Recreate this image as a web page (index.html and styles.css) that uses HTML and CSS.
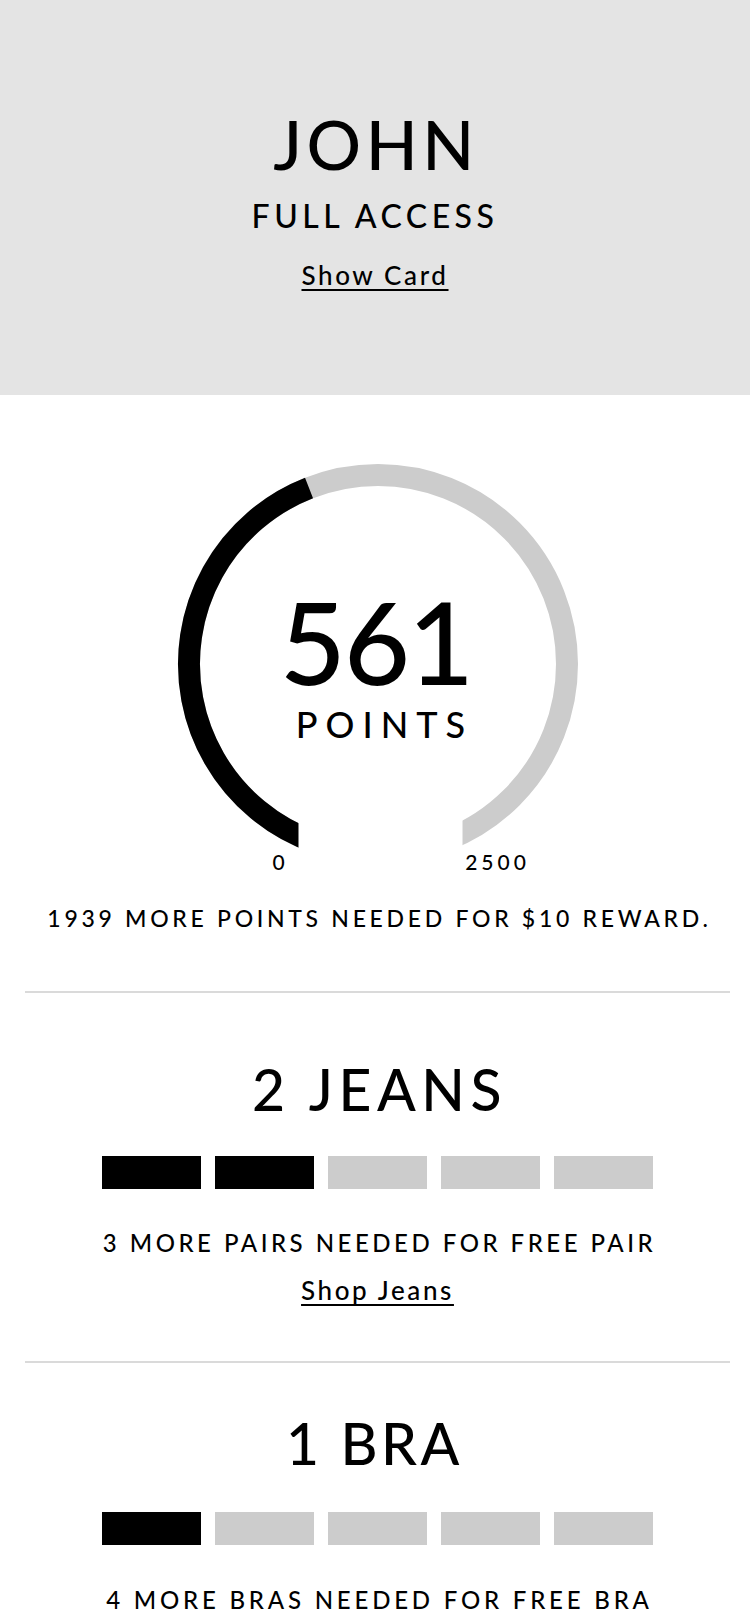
FILE: index.html
```html
<!DOCTYPE html>
<html lang="en">
<head>
<meta charset="utf-8">
<title>Rewards</title>
<link rel="stylesheet" href="styles.css">
</head>
<body>
<header class="member">
  <h1 class="member-name">JOHN</h1>
  <p class="member-tier">FULL ACCESS</p>
  <a class="member-link" href="#">Show Card</a>
</header>
<main class="rewards">
  <section class="points">
    <div class="gauge">
      <svg class="gauge-ring" width="404" height="400" viewBox="0 0 404 400" aria-hidden="true">
        <defs>
          <mask id="gauge-cut">
            <rect x="0" y="0" width="404" height="400" fill="#fff"/>
            <rect x="122.5" y="320" width="164" height="80" fill="#000"/>
          </mask>
        </defs>
        <g mask="url(#gauge-cut)">
          <circle cx="202" cy="200" r="189" fill="none" stroke="#cccccc" stroke-width="22"/>
          <path d="M 202 389 A 189 189 0 0 1 133.03 24.02" fill="none" stroke="#000" stroke-width="22"/>
        </g>
      </svg>
      <div class="gauge-value">561</div>
      <div class="gauge-unit">POINTS</div>
      <div class="gauge-scale">
        <span class="gauge-min">0</span>
        <span class="gauge-max">2500</span>
      </div>
    </div>
    <p class="points-note">1939 MORE POINTS NEEDED FOR $10 REWARD.</p>
  </section>
  <section class="tally tally-jeans">
    <h2 class="tally-title">2 JEANS</h2>
    <div class="tally-bars">
      <span class="bar bar-on"></span>
      <span class="bar bar-on"></span>
      <span class="bar"></span>
      <span class="bar"></span>
      <span class="bar"></span>
    </div>
    <p class="tally-note">3 MORE PAIRS NEEDED FOR FREE PAIR</p>
    <a class="tally-link" href="#">Shop Jeans</a>
  </section>
  <section class="tally tally-bra">
    <h2 class="tally-title">1 BRA</h2>
    <div class="tally-bars">
      <span class="bar bar-on"></span>
      <span class="bar"></span>
      <span class="bar"></span>
      <span class="bar"></span>
      <span class="bar"></span>
    </div>
    <p class="tally-note">4 MORE BRAS NEEDED FOR FREE BRA</p>
  </section>
</main>
</body>
</html>
```
FILE: styles.css
```css
* { box-sizing: border-box; }

html, body {
  margin: 0;
  padding: 0;
  background: #ffffff;
}

body {
  font-family: "Lato", "Open Sans", sans-serif;
  font-weight: 500;
  color: #000;
  width: 750px;
  height: 1624px;
  overflow: hidden;
}

h1, h2, p { margin: 0; font-weight: 500; }

a { color: #000; }

/* ---------- header ---------- */
.member {
  height: 395px;
  background: #e4e4e4;
  display: flex;
  flex-direction: column;
  align-items: center;
  padding-top: 110px;
}

.member-name {
  font-size: 68px;
  line-height: 1;
  letter-spacing: 4.5px;
  padding-left: 2px;
}

.member-tier {
  margin-top: 22px;
  font-size: 32px;
  line-height: 1;
  letter-spacing: 4.5px;
  padding-left: 0;
}

.member-link {
  margin-top: 30px;
  font-size: 26px;
  line-height: 1;
  letter-spacing: 2.6px;
  text-decoration: underline;
  text-decoration-thickness: 2px;
  text-underline-offset: 4px;
}

/* ---------- main ---------- */
.rewards {
  margin: 0 20px 0 25px;
}

.points {
  display: flex;
  flex-direction: column;
  align-items: center;
  padding-bottom: 61px;
}

.gauge {
  position: relative;
  width: 404px;
  margin-top: 69px;
  padding-top: 120px;
  display: flex;
  flex-direction: column;
  align-items: center;
}

.gauge-ring {
  position: absolute;
  top: 0;
  left: 0;
  display: block;
}

.gauge-value,
.gauge-unit,
.gauge-scale { position: relative; }

.gauge-value {
  font-size: 114px;
  line-height: 1;
  letter-spacing: -2px;
  padding-right: 3px;
}

.gauge-unit {
  margin-top: 8px;
  font-size: 36px;
  line-height: 1;
  letter-spacing: 8px;
  padding-left: 14px;
}

.gauge-scale {
  align-self: stretch;
  margin-top: 109px;
  display: flex;
  gap: 157px;
  padding-left: 85px;
  font-size: 21px;
  line-height: 1;
  letter-spacing: 4px;
}

.gauge-min,
.gauge-max { text-align: center; }

.gauge-min { width: 40px; }
.gauge-max { width: 80px; }

.points-note {
  margin-top: 35px;
  font-size: 23px;
  line-height: 1;
  letter-spacing: 3.7px;
  padding-left: 4px;
  white-space: nowrap;
}

/* ---------- tallies ---------- */
.tally {
  border-top: 2px solid #dadada;
  display: flex;
  flex-direction: column;
  align-items: center;
}

.tally-jeans {
  padding-top: 68px;
  padding-bottom: 58px;
}

.tally-bra {
  padding-top: 52px;
}

.tally-title {
  font-size: 57px;
  line-height: 1;
  letter-spacing: 5.5px;
  padding-left: 4px;
}

.tally-bra .tally-title {
  letter-spacing: 3.5px;
  padding-left: 0;
  padding-right: 6px;
}

.tally-bars {
  display: flex;
  gap: 14px;
  margin-top: 38px;
}

.tally-bra .tally-bars { margin-top: 40px; }

.bar {
  width: 99px;
  height: 33px;
  background: #cccccc;
}

.bar-on { background: #000; }

.tally-note {
  margin-top: 42px;
  font-size: 24px;
  line-height: 1;
  letter-spacing: 3.5px;
  padding-left: 4px;
  white-space: nowrap;
}

.tally-bra .tally-note {
  margin-top: 43px;
  letter-spacing: 3.8px;
}

.tally-link {
  margin-top: 22px;
  font-size: 26px;
  line-height: 1;
  letter-spacing: 2.6px;
  text-decoration: underline;
  text-decoration-thickness: 2px;
  text-underline-offset: 4px;
}
```
